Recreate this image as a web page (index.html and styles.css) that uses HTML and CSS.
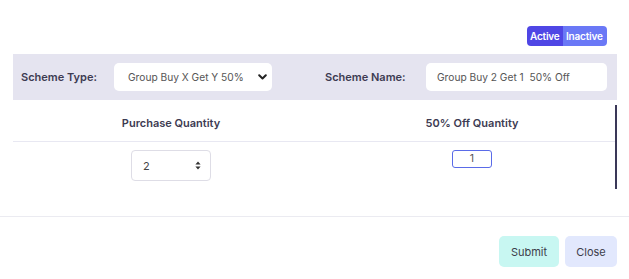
FILE: index.html
```html
<!DOCTYPE html>
<html lang="en">
<head>
  <meta charset="UTF-8">
  <meta name="viewport" content="width=device-width, initial-scale=1.0">
  <title>Scheme</title>
  <link rel="stylesheet" href="styles.css">
</head>
<body>
  <div class="modal-body">
    <div class="status-row">
      <div class="toggle">
        <span class="toggle-btn active">Active</span>
        <span class="toggle-btn inactive">Inactive</span>
      </div>
    </div>

    <div class="scheme-bar">
      <label class="bar-label">Scheme Type:</label>
      <div class="select-box">
        <span>Group Buy X Get Y 50%</span>
        <svg class="chevron" width="9" height="6" viewBox="0 0 9 6"><path d="M1.2 1.2 L4.5 4.5 L7.8 1.2" fill="none" stroke="#222" stroke-width="2" stroke-linecap="round" stroke-linejoin="round"/></svg>
      </div>
      <label class="bar-label name-label">Scheme Name:</label>
      <div class="text-box">Group Buy 2 Get 1&nbsp; 50% Off</div>
    </div>

    <div class="qty-table">
      <div class="qty-head">Purchase Quantity</div>
      <div class="qty-head">50% Off Quantity</div>
      <div class="qty-cell">
        <div class="number-box">
          <span>2</span>
          <svg width="6" height="9" viewBox="0 0 6 9"><path d="M3 0.5 L5.6 3.5 H0.4 Z M3 8.5 L5.6 5.5 H0.4 Z" fill="#333"/></svg>
        </div>
      </div>
      <div class="qty-cell">
        <div class="small-input">1</div>
      </div>
    </div>
  </div>

  <div class="modal-footer">
    <button type="button" class="btn btn-submit">Submit</button>
    <button type="button" class="btn btn-close">Close</button>
  </div>
</body>
</html>
```

FILE: styles.css
```css
body {
  margin: 0;
  font-family: "Inter", "Noto Sans", sans-serif;
  color: #3d3b52;
  background: #fff;
}
.modal-body {
  padding: 0 12px 0 13px;
}
.status-row {
  display: flex;
  justify-content: flex-end;
  padding: 26px 10px 8px 0;
}
.toggle {
  display: flex;
  border-radius: 4px;
  overflow: hidden;
  height: 20px;
}
.toggle-btn {
  display: flex;
  align-items: center;
  padding: 0 3px;
  font-size: 10px;
  font-weight: 600;
  color: #fff;
  letter-spacing: -0.2px;
}
.toggle-btn.active {
  background: #4f46e5;
  width: 30px;
}
.toggle-btn.inactive {
  background: #6a78f6;
  width: 38px;
}
.scheme-bar {
  display: flex;
  align-items: center;
  height: 46px;
  background: #e5e4f0;
  padding-left: 8px;
}
.bar-label {
  font-size: 11px;
  font-weight: 600;
  color: #3d3b52;
  width: 93px;
}
.name-label {
  margin-left: 53px;
  width: 101px;
}
.select-box, .text-box {
  display: flex;
  align-items: center;
  box-sizing: border-box;
  height: 28px;
  background: #fff;
  border-radius: 5px;
  font-size: 10.2px;
  color: #555;
}
.select-box {
  width: 158px;
  padding: 0 5px 0 14px;
  justify-content: space-between;
}
.text-box {
  width: 181px;
  padding-left: 11px;
}
.qty-table {
  display: grid;
  grid-template-columns: 316px 1fr;
  margin-top: 5px;
  height: 84px;
  border-right: 2px solid #3a3858;
  align-content: start;
}
.qty-head {
  height: 36px;
  display: flex;
  align-items: center;
  justify-content: center;
  font-size: 11px;
  font-weight: 600;
  color: #3d3b52;
  border-bottom: 1px solid #e8e8f2;
}
.qty-cell {
  display: flex;
  justify-content: center;
  padding-top: 8px;
}
.number-box {
  display: flex;
  align-items: center;
  justify-content: space-between;
  box-sizing: border-box;
  width: 80px;
  height: 31px;
  padding: 0 9px 0 11px;
  border: 1px solid #dedde6;
  border-radius: 4px;
  font-size: 11px;
  color: #444;
}
.small-input {
  box-sizing: border-box;
  width: 40px;
  height: 18px;
  border: 1px solid #5a6be8;
  border-radius: 3px;
  font-size: 10.5px;
  color: #555;
  text-align: center;
  line-height: 16px;
}
.modal-footer {
  display: flex;
  justify-content: flex-end;
  gap: 6px;
  margin-top: 27px;
  border-top: 1px solid #ebebf1;
  padding: 19px 12px 0 0;
}
.btn {
  height: 31px;
  border: none;
  border-radius: 5px;
  font-family: inherit;
  font-size: 11px;
  color: #3d3d4a;
  cursor: pointer;
}
.btn-submit {
  width: 60px;
  background: #c8f7f2;
}
.btn-close {
  width: 52px;
  background: #e2e8fd;
}
```
